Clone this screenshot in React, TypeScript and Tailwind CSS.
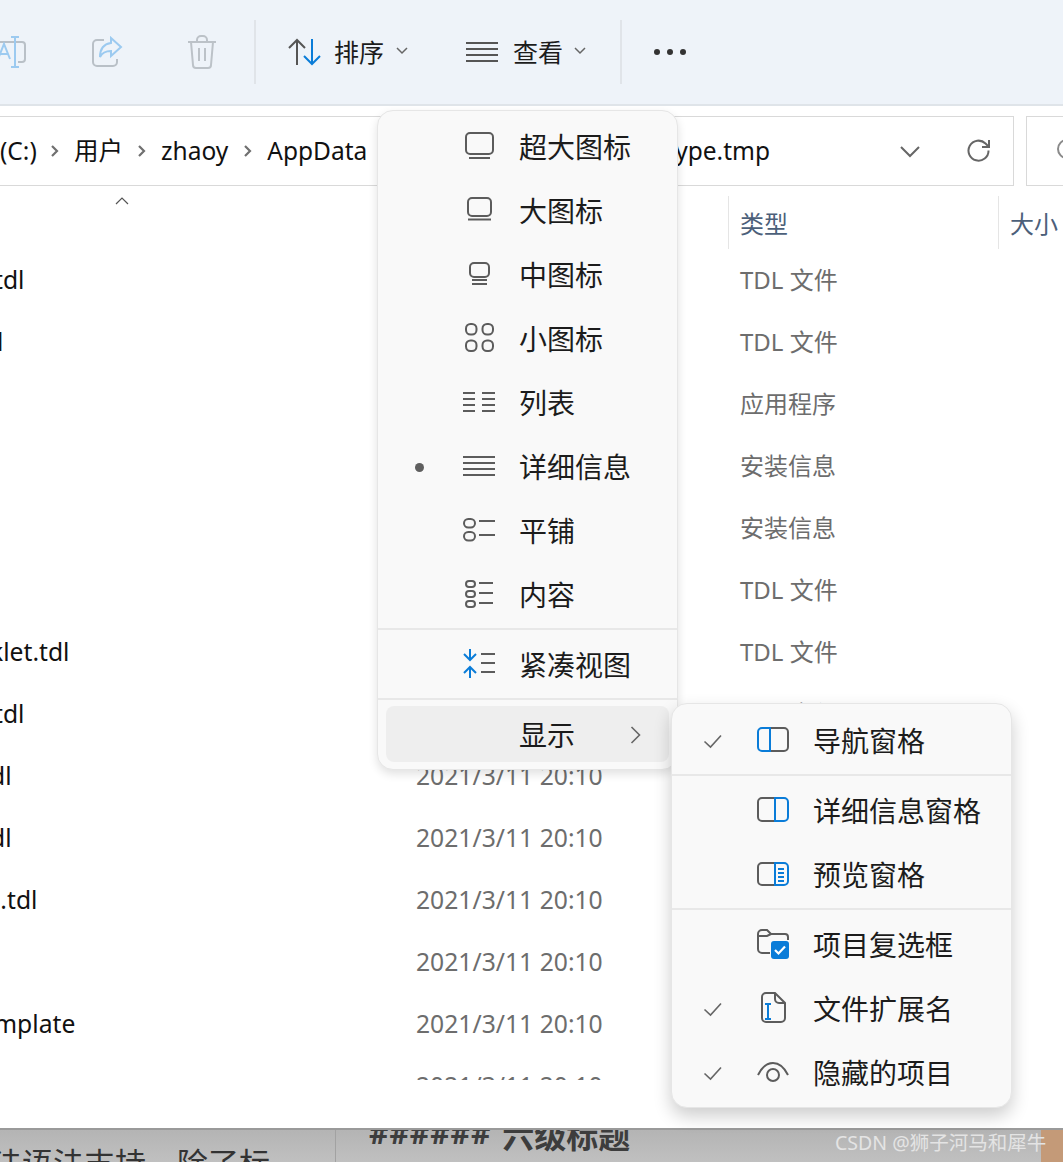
import type { ReactNode } from "react";

const GRAY = "#5c5c5c";
const BLUE = "#0a7cd8";

const Icon = ({ children, w = 32, h = 32 }: { children: ReactNode; w?: number; h?: number }) => (
  <svg width={w} height={h} viewBox={`0 0 ${w} ${h}`} fill="none" stroke={GRAY} strokeWidth="2" className="block overflow-visible shrink-0">
    {children}
  </svg>
);

const Lines = ({ x1, x2, ys }: { x1: number; x2: number; ys: number[] }) => (
  <>
    {ys.map((y) => (
      <line key={y} x1={x1} x2={x2} y1={y} y2={y} />
    ))}
  </>
);

const icons: Record<string, ReactNode> = {
  xl: (
    <Icon>
      <rect x="3" y="2" width="27" height="21" rx="4" />
      <line x1="6" x2="27" y1="27" y2="27" />
    </Icon>
  ),
  lg: (
    <Icon>
      <rect x="5" y="3" width="23" height="18" rx="4" />
      <line x1="5" x2="28" y1="24.5" y2="24.5" />
    </Icon>
  ),
  md: (
    <Icon>
      <rect x="7" y="4" width="19" height="14" rx="4" />
      <Lines x1={9} x2={24} ys={[21, 25]} />
    </Icon>
  ),
  sm: (
    <Icon>
      <rect x="3" y="1" width="10.5" height="10.5" rx="4.5" />
      <rect x="19.5" y="1" width="10.5" height="10.5" rx="4.5" />
      <rect x="3" y="17.5" width="10.5" height="10.5" rx="4.5" />
      <rect x="19.5" y="17.5" width="10.5" height="10.5" rx="4.5" />
    </Icon>
  ),
  list: (
    <Icon>
      <Lines x1={0} x2={12} ys={[6, 12, 18, 24]} />
      <Lines x1={19} x2={32} ys={[6, 12, 18, 24]} />
    </Icon>
  ),
  details: (
    <Icon>
      <Lines x1={0} x2={32} ys={[6, 12, 18, 24]} />
    </Icon>
  ),
  tiles: (
    <Icon>
      <rect x="1" y="4" width="11" height="8.5" rx="4.25" />
      <rect x="1" y="17" width="11" height="8.5" rx="4.25" />
      <line x1="16" x2="32" y1="6" y2="6" />
      <line x1="16" x2="32" y1="20" y2="20" />
    </Icon>
  ),
  content: (
    <Icon>
      <rect x="3" y="2" width="9" height="6" rx="3" />
      <rect x="3" y="12" width="9" height="6" rx="3" />
      <rect x="3" y="22" width="9" height="6" rx="3" />
      <Lines x1={16} x2={30} ys={[4, 14, 24]} />
    </Icon>
  ),
  compact: (
    <Icon>
      <g stroke={BLUE}>
        <path d="M7 0v11M1 5l6 6 6-6" />
        <path d="M7 29V18M1 24l6-6 6 6" />
      </g>
      <Lines x1={18} x2={32} ys={[5, 14, 23]} />
    </Icon>
  ),
  nav: (
    <Icon>
      <path d="M13 3h14a4 4 0 0 1 4 4v15a4 4 0 0 1-4 4H13" />
      <path d="M13 3H5a4 4 0 0 0-4 4v15a4 4 0 0 0 4 4h8z" stroke={BLUE} />
    </Icon>
  ),
  detailsPane: (
    <Icon>
      <path d="M18 3H5a4 4 0 0 0-4 4v15a4 4 0 0 0 4 4h13" />
      <path d="M18 3h9a4 4 0 0 1 4 4v15a4 4 0 0 1-4 4h-9z" stroke={BLUE} />
    </Icon>
  ),
  preview: (
    <Icon>
      <path d="M18 4H5a4 4 0 0 0-4 4v14a4 4 0 0 0 4 4h13" />
      <path d="M18 4h9a4 4 0 0 1 4 4v14a4 4 0 0 1-4 4h-9z" stroke={BLUE} />
      <g stroke={BLUE}>
        <Lines x1={21} x2={27} ys={[10, 14, 18, 22]} />
      </g>
    </Icon>
  ),
  checkbox: (
    <Icon>
      <path d="M13 24H5a4 4 0 0 1-4-4V5a4 4 0 0 1 4-4h5l4 4h14a3 3 0 0 1 3 3v3" />
      <path d="M1 7h9l4-2" />
      <rect x="14" y="12" width="18" height="18" rx="3" fill={BLUE} stroke="none" />
      <path d="M18 21l3.5 3.5L28 17.5" stroke="#fff" strokeWidth="2.2" />
    </Icon>
  ),
  ext: (
    <Icon>
      <path d="M18 0H9a4 4 0 0 0-4 4v21a4 4 0 0 0 4 4h15a4 4 0 0 0 4-4V10zM18 0v6a4 4 0 0 0 4 4h6" />
      <g stroke={BLUE}>
        <path d="M11 11v15M8 11h6M8 26h6" />
      </g>
    </Icon>
  ),
  eye: (
    <Icon>
      <path d="M1 18C5 10 10 6 16 6s11 4 15 12" />
      <circle cx="16" cy="18" r="6" />
    </Icon>
  ),
};

const Check = () => (
  <svg width="20" height="16" viewBox="0 0 20 16" fill="none" stroke="#666" strokeWidth="1.6" className="block">
    <path d="M1.5 8.5l6 5.5L18 2.5" />
  </svg>
);

const Chevron = ({ d, w = 12, h = 12, width = 1.5, color = "#666" }: { d: string; w?: number; h?: number; width?: number; color?: string }) => (
  <svg width={w} height={h} viewBox={`0 0 ${w} ${h}`} fill="none" stroke={color} strokeWidth={width} className="block shrink-0">
    <path d={d} />
  </svg>
);

const MenuRow = ({ icon, label, mark, className = "h-16" }: { icon?: string; label: string; mark?: ReactNode; className?: string }) => (
  <div className={`flex items-center pl-[21px] shrink-0 ${className}`}>
    <div className="w-10 flex justify-center">{mark}</div>
    <div className="w-20 flex justify-center">{icon && icons[icon]}</div>
    <span className="text-[28px] leading-9 text-[#1c1c1c] whitespace-nowrap">{label}</span>
  </div>
);

const Divider = ({ className = "" }: { className?: string }) => <div className={`h-0.5 bg-[#e8e8e8] shrink-0 ${className}`} />;

const Dot = () => <div className="w-[9px] h-[9px] rounded-full bg-[#5f5f5f]" />;

const rows = [
  { name: "tdl", cls: "-ml-[6px]", type: "TDL 文件" },
  { name: "l", cls: "-ml-[3px]", type: "TDL 文件" },
  { name: "", cls: "", type: "应用程序" },
  { name: "", cls: "", type: "安装信息" },
  { name: "", cls: "", type: "安装信息" },
  { name: "", cls: "", type: "TDL 文件" },
  { name: "klet.tdl", cls: "-ml-[10px]", type: "TDL 文件" },
  { name: "tdl", cls: "-ml-[6px]", type: "TDL 文件" },
  { name: "dl", cls: "-ml-[10px]", type: "TDL 文件" },
  { name: "dl", cls: "-ml-[10px]", type: "TDL 文件" },
  { name: "l.tdl", cls: "-ml-[6px]", type: "TDL 文件" },
  { name: "", cls: "", type: "TDL 文件" },
  { name: "mplate", cls: "-ml-[6px]", type: "TDL 文件" },
  { name: "", cls: "", type: "TDL 文件" },
];

const Sep = () => <Chevron d="M2 1l5 5-5 5" w={9} h={12} width={2.2} color="#707070" />;

export default function App() {
  return (
    <div className="relative w-[1063px] h-[1162px] overflow-hidden bg-white flex flex-col font-['Noto_Sans','Noto_Sans_CJK_SC',sans-serif]">
      {/* toolbar */}
      <div className="h-[106px] shrink-0 bg-[#eef3f9] border-b-2 border-[#dfe4e9] flex items-center overflow-hidden">
        <svg width="32" height="32" viewBox="0 0 32 32" fill="none" className="block -ml-[6px] shrink-0" stroke="#b9c0c7" strokeWidth="2">
          <path d="M2 6h26a3 3 0 0 1 3 3v14a3 3 0 0 1-3 3h-4" />
          <path d="M21 1v30M17 1h8M17 31h8" stroke="#9ccaf0" />
          <path d="M4 23l6-15 6 15M6 18h8" stroke="#9ccaf0" />
        </svg>
        <svg width="32" height="32" viewBox="0 0 32 32" fill="none" className="block ml-[65px] shrink-0" stroke="#b9c0c7" strokeWidth="2">
          <path d="M13 4H6a4 4 0 0 0-4 4v18a4 4 0 0 0 4 4h16a4 4 0 0 0 4-4v-3" />
          <path d="M20 2l10 9-10 9v-5c-6 0-9 2-11 6 0-8 4-13 11-14z" stroke="#9ccaf0" />
        </svg>
        <svg width="30" height="34" viewBox="0 0 30 34" fill="none" className="block ml-16 shrink-0" stroke="#bcc2c8" strokeWidth="2">
          <path d="M1 7h28M10 7V5a4 4 0 0 1 4-4h2a4 4 0 0 1 4 4v2M4 7l2 23a3 3 0 0 0 3 3h12a3 3 0 0 0 3-3l2-23M12 13v13M18 13v13" />
        </svg>
        <div className="w-0.5 h-16 bg-[#e0e4e9] ml-[37px] shrink-0" />
        <svg width="34" height="28" viewBox="0 0 34 28" fill="none" className="block ml-8 shrink-0" strokeWidth="2">
          <path d="M9 27V2M1 10l8-8 8 8" stroke="#555" />
          <path d="M24 1v25M16 18l8 8 8-8" stroke={BLUE} />
        </svg>
        <span className="text-[25px] leading-8 text-[#1c1c1c] ml-3 -mt-px">排序</span>
        <div className="ml-3">
          <Chevron d="M1 2l5 5 5-5" />
        </div>
        <svg width="32" height="22" viewBox="0 0 32 22" fill="none" className="block ml-[58px] shrink-0" stroke="#555" strokeWidth="2">
          <path d="M0 2h32M0 8h32M0 14h32M0 20h32" />
        </svg>
        <span className="text-[25px] leading-8 text-[#1c1c1c] ml-[15px] -mt-px">查看</span>
        <div className="ml-[11px]">
          <Chevron d="M1 2l5 5 5-5" />
        </div>
        <div className="w-0.5 h-16 bg-[#e0e4e9] ml-[34px] shrink-0" />
        <div className="flex gap-[7px] ml-8">
          <div className="w-[6px] h-[6px] rounded-full bg-[#333]" />
          <div className="w-[6px] h-[6px] rounded-full bg-[#333]" />
          <div className="w-[6px] h-[6px] rounded-full bg-[#333]" />
        </div>
      </div>

      {/* address bar */}
      <div className="flex mt-2.5 h-[70px] shrink-0">
        <div className="w-[1015px] -ml-px border border-[#d9d9d9] flex items-center text-[24.5px] text-[#111] overflow-hidden shrink-0">
          <span className="w-[35px] whitespace-nowrap">(C:)</span>
          <div className="ml-[15px]"><Sep /></div>
          <span className="ml-[15px]">用户</span>
          <div className="ml-[14px]"><Sep /></div>
          <span className="ml-[15px]">zhaoy</span>
          <div className="ml-[15px]"><Sep /></div>
          <span className="ml-[15px]">AppData</span>
          <span className="ml-auto">ype.tmp</span>
          <div className="ml-[130px]">
            <Chevron d="M1 2l9 9 9-9" w={20} h={13} width={2} color="#666" />
          </div>
          <svg width="24" height="24" viewBox="0 0 24 24" fill="none" stroke="#666" strokeWidth="2" className="block ml-[47px] mr-[22px] shrink-0">
            <path d="M21.5 11.5a10 10 0 1 1-3-7L22 8M22 1v7h-7" />
          </svg>
        </div>
        <div className="flex-1 ml-3 border border-r-0 border-[#d9d9d9] flex items-center pl-[29px] overflow-hidden">
          <svg width="20" height="24" viewBox="0 0 20 24" fill="none" stroke="#8a8a8a" strokeWidth="2" className="block shrink-0">
            <circle cx="11" cy="10" r="9" />
          </svg>
        </div>
      </div>

      {/* column header */}
      <div className="flex h-[53px] mt-2.5 shrink-0 text-[24px] text-[#4c607a]">
        <div className="w-[728px] shrink-0 pl-[115px] pt-[1px]">
          <Chevron d="M1 7l6-6 6 6" w={14} h={8} width={1.2} color="#555" />
        </div>
        <div className="w-[270px] shrink-0 border-l border-[#e5e5e5] pl-[11px] flex items-center pt-0.5">类型</div>
        <div className="flex-1 border-l border-[#e5e5e5] pl-[11px] flex items-center pt-0.5 whitespace-nowrap overflow-hidden">大小</div>
      </div>

      {/* file list */}
      <div className="h-[831px] shrink-0 overflow-hidden">
        {rows.map((r, i) => (
          <div key={i} className="h-[62px] flex items-center text-[24.7px]">
            <div className="w-[416px] shrink-0 overflow-hidden text-[#111] whitespace-nowrap">
              <div className={r.cls}>{r.name}</div>
            </div>
            <div className="w-[324px] shrink-0 text-[#6d6d6d] whitespace-nowrap">2021/3/11 20:10</div>
            <div className="text-[#6d6d6d] text-[24px] whitespace-nowrap">{r.type}</div>
          </div>
        ))}
      </div>

      <div className="h-12 shrink-0" />

      {/* window behind */}
      <div className="h-[34px] shrink-0 flex border-t-2 border-[#9a9a9a] bg-gradient-to-b from-[#b4b4b4] to-[#c0c0c0] overflow-hidden">
        <div className="w-[336px] shrink-0 border-r border-[#a2a2a2] text-[31px] leading-9 pt-[15px] text-[#333] whitespace-nowrap overflow-hidden">
          <div className="-ml-[9px]">法语法支持，除了标</div>
        </div>
        <div className="flex-1 pl-[33px] text-[#3d3d3d] whitespace-nowrap flex items-start gap-[11px]">
          <span className="text-[30px] leading-9 font-bold tracking-[1px] -mt-[15px]">######</span>
          <span className="text-[32px] leading-9 font-bold -mt-3">六级标题</span>
        </div>
        <div className="w-[22px] shrink-0 bg-[#c49a78]" />
      </div>
      <span className="absolute left-[835px] top-[1131px] text-[19.5px] leading-6 text-[#e4e4e4] whitespace-nowrap">CSDN @狮子河马和犀牛</span>

      {/* view menu */}
      <div className="absolute left-[377px] top-[110px] w-[301px] h-[660px] pt-1 flex flex-col rounded-2xl bg-[#f9f9f9] border border-[#e6e6e6] shadow-[0_4px_10px_rgba(0,0,0,0.12)]">
        <MenuRow icon="xl" label="超大图标" />
        <MenuRow icon="lg" label="大图标" />
        <MenuRow icon="md" label="中图标" />
        <MenuRow icon="sm" label="小图标" />
        <MenuRow icon="list" label="列表" />
        <MenuRow icon="details" label="详细信息" mark={<Dot />} />
        <MenuRow icon="tiles" label="平铺" />
        <MenuRow icon="content" label="内容" />
        <Divider className="mt-px" />
        <MenuRow icon="compact" label="紧凑视图" className="h-[68px] pt-0.5" />
        <Divider />
        <div className="relative mx-2 mt-1.5">
          <MenuRow label="显示" className="h-14 pt-0.5 -ml-2" />
          <div className="absolute inset-0 rounded-lg bg-black/[0.045]" />
          <div className="absolute right-[28px] top-[20px]">
            <Chevron d="M1.5 1l8 8-8 8" w={11} h={18} width={1.6} />
          </div>
        </div>
      </div>

      {/* show submenu */}
      <div className="absolute left-[671px] top-[703px] w-[341px] h-[405px] pt-[5px] flex flex-col rounded-2xl bg-[#f9f9f9] border border-[#e6e6e6] shadow-[0_8px_18px_rgba(0,0,0,0.2)]">
        <MenuRow icon="nav" label="导航窗格" mark={<Check />} />
        <Divider className="mt-px" />
        <MenuRow icon="detailsPane" label="详细信息窗格" className="h-[67px] pt-[3px]" />
        <MenuRow icon="preview" label="预览窗格" />
        <Divider className="mt-px" />
        <MenuRow icon="checkbox" label="项目复选框" className="h-[67px] pt-[3px]" />
        <MenuRow icon="ext" label="文件扩展名" mark={<Check />} />
        <MenuRow icon="eye" label="隐藏的项目" mark={<Check />} />
      </div>
    </div>
  );
}
